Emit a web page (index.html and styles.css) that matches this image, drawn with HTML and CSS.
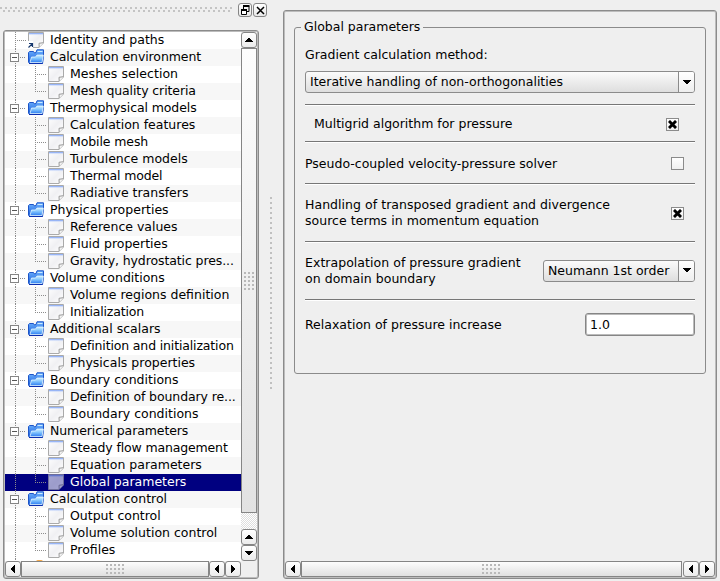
FILE: index.html
```html
<!DOCTYPE html>
<html lang="en">
<head>
<meta charset="utf-8">
<title>Global parameters</title>
<link rel="stylesheet" href="styles.css">
</head>
<body>
<svg class="defs" width="0" height="0">
  <defs>
    <linearGradient id="paper" x1="0" y1="0" x2="1" y2="1"><stop offset="0" stop-color="#fff"/><stop offset=".5" stop-color="#f0f0f3"/><stop offset="1" stop-color="#fff"/></linearGradient>
    <linearGradient id="cap" x1="0" y1="0" x2="0" y2="1"><stop offset="0" stop-color="#6c96f4"/><stop offset="1" stop-color="#fff" stop-opacity="0"/></linearGradient>
    <linearGradient id="blue" x1="0" y1="0" x2="0" y2="1"><stop offset="0" stop-color="#6fb4ff"/><stop offset="1" stop-color="#1357d8"/></linearGradient>
    <linearGradient id="front" x1="0" y1="0" x2="0" y2="1"><stop offset="0" stop-color="#d0f2ff"/><stop offset=".5" stop-color="#7cc0fc"/><stop offset="1" stop-color="#2d7df2"/></linearGradient>
  </defs>
  <symbol id="doc" viewBox="0 0 16 16">
    <path d="M.5 .5h15v10.500l-4.500 4.500H.5z" fill="url(#paper)" stroke="#aaa"/>
    <path d="M1 1h14v3H1z" fill="url(#cap)"/>
    <path d="M15.300 10.700 11 11.300 11.200 15.300" fill="#f4f4f4" stroke="#999"/>
  </symbol>
  <symbol id="link" viewBox="0 0 16 16">
    <use href="#doc"/>
    <path d="M0 9h5v7H0z" fill="#fff"/>
    <path d="M.5 15.500 4 12M1 11.500h3.500V15" fill="none" stroke="#17386e" stroke-width="1.200"/>
  </symbol>
  <symbol id="folder" viewBox="0 0 16 16">
    <path d="M.5 3.500 1.500 2.500H5.500L6.500 4 8 3.500 9 .8h6.500v7l-1 6.700H1.500L.5 13z" fill="url(#blue)" stroke="#1d55c8"/>
    <path d="M9.500 2.500h5" stroke="#cbeaff"/>
    <path d="M2 13.500 3.500 8H7.500L9 6h6.300L14 13.500z" fill="url(#front)" stroke="#e4f6ff" stroke-width=".8"/>
    <path d="M1 14.500h13.500" stroke="#0b2fae"/>
  </symbol>
  <symbol id="up" viewBox="0 0 8 5"><path d="M3 0h2v1h1v1h1v1h1v1H0V3h1V2h1V1h1z"/></symbol>
  <symbol id="down" viewBox="0 0 8 5"><path d="M0 0h8v1H7v1H6v1H5v1H3V3H2V2H1V1H0z"/></symbol>
  <symbol id="left" viewBox="0 0 4 8"><path d="M4 0v8H3V7H2V6H1V5H0V3h1V2h1V1h1V0z"/></symbol>
  <symbol id="right" viewBox="0 0 4 8"><path d="M0 0v8h1V7h1V6h1V5h1V3H3V2H2V1H1V0z"/></symbol>
  <symbol id="cross" viewBox="0 0 9 9"><path d="M2 2l5 5M7 2 2 7" stroke="#000" stroke-width="2.900" stroke-linecap="square"/></symbol>
</svg>

<div class="window">
  <section class="dock">
    <header class="dock-title">
      <span class="hatch"></span>
      <span class="tool"><svg width="13" height="13" viewBox="0 0 13 13"><path d="M4.500 5V2.500h5.500v5H8" fill="none" stroke="#000"/><path d="M4 2h6.500" stroke="#000" stroke-width="2"/><path d="M2.500 5.500h5v5h-5z" fill="#fff" stroke="#000"/><path d="M2 6h6" stroke="#000" stroke-width="2"/></svg></span>
      <span class="tool"><svg width="13" height="13" viewBox="0 0 13 13"><path d="M3 3l7 7M10 3l-7 7" stroke="#000" stroke-width="1.500"/></svg></span>
    </header>
    <div class="frame tree-frame">
      <div class="tree-top">
        <ul class="tree">
          <li class="top"><svg><use href="#link"/></svg><span>Identity and paths</span></li>
          <li class="group"><i></i><svg><use href="#folder"/></svg><span class="tight">Calculation environment</span></li>
          <li><svg><use href="#doc"/></svg><span class="loose">Meshes selection</span></li>
          <li class="last"><svg><use href="#doc"/></svg><span class="tight">Mesh quality criteria</span></li>
          <li class="group"><i></i><svg><use href="#folder"/></svg><span class="tight">Thermophysical models</span></li>
          <li><svg><use href="#doc"/></svg><span>Calculation features</span></li>
          <li><svg><use href="#doc"/></svg><span class="tight">Mobile mesh</span></li>
          <li><svg><use href="#doc"/></svg><span>Turbulence models</span></li>
          <li><svg><use href="#doc"/></svg><span class="tighter">Thermal model</span></li>
          <li class="last"><svg><use href="#doc"/></svg><span>Radiative transfers</span></li>
          <li class="group"><i></i><svg><use href="#folder"/></svg><span>Physical properties</span></li>
          <li><svg><use href="#doc"/></svg><span>Reference values</span></li>
          <li><svg><use href="#doc"/></svg><span>Fluid properties</span></li>
          <li class="last"><svg><use href="#doc"/></svg><span class="tight">Gravity, hydrostatic pres...</span></li>
          <li class="group"><i></i><svg><use href="#folder"/></svg><span>Volume conditions</span></li>
          <li><svg><use href="#doc"/></svg><span>Volume regions definition</span></li>
          <li class="last"><svg><use href="#doc"/></svg><span class="tighter">Initialization</span></li>
          <li class="group"><i></i><svg><use href="#folder"/></svg><span>Additional scalars</span></li>
          <li><svg><use href="#doc"/></svg><span class="tighter">Definition and initialization</span></li>
          <li class="last"><svg><use href="#doc"/></svg><span>Physicals properties</span></li>
          <li class="group"><i></i><svg><use href="#folder"/></svg><span>Boundary conditions</span></li>
          <li><svg><use href="#doc"/></svg><span class="tight">Definition of boundary re...</span></li>
          <li class="last"><svg><use href="#doc"/></svg><span>Boundary conditions</span></li>
          <li class="group"><i></i><svg><use href="#folder"/></svg><span class="tight">Numerical parameters</span></li>
          <li><svg><use href="#doc"/></svg><span class="tighter">Steady flow management</span></li>
          <li><svg><use href="#doc"/></svg><span>Equation parameters</span></li>
          <li class="last selected"><svg><use href="#doc"/></svg><span>Global parameters</span></li>
          <li class="group"><i></i><svg><use href="#folder"/></svg><span>Calculation control</span></li>
          <li><svg><use href="#doc"/></svg><span>Output control</span></li>
          <li><svg><use href="#doc"/></svg><span>Volume solution control</span></li>
          <li class="last"><svg><use href="#doc"/></svg><span>Profiles</span></li>
          <li class="cut"><b></b></li>
        </ul>
        <div class="vbar">
          <span class="btn"><svg width="8" height="5"><use href="#up"/></svg></span>
          <span class="slider"><i class="grip"></i></span>
          <span class="track"></span>
          <span class="btn"><svg width="8" height="5"><use href="#up"/></svg></span>
          <span class="btn"><svg width="8" height="5"><use href="#down"/></svg></span>
        </div>
      </div>
      <div class="hbar">
        <span class="btn"><svg width="4" height="8"><use href="#left"/></svg></span>
        <span class="slider"><i class="grip"></i></span>
        <span class="btn"><svg width="4" height="8"><use href="#left"/></svg></span>
        <span class="btn"><svg width="4" height="8"><use href="#right"/></svg></span>
      </div>
    </div>
  </section>

  <div class="splitter"></div>

  <main class="frame panel">
    <fieldset class="box">
      <legend>Global parameters</legend>
      <label class="method">Gradient calculation method:</label>
      <div class="combo"><span>Iterative handling of non-orthogonalities</span><b><svg width="8" height="5"><use href="#down"/></svg></b></div>
      <div class="row r1"><span>Multigrid algorithm for pressure</span><i class="check"><svg width="9" height="9"><use href="#cross"/></svg></i></div>
      <div class="row r2"><span>Pseudo-coupled velocity-pressure solver</span><i class="check"></i></div>
      <div class="row r3"><span>Handling of transposed gradient and divergence<br>source terms in momentum equation</span><i class="check"><svg width="9" height="9"><use href="#cross"/></svg></i></div>
      <div class="row r4"><span>Extrapolation of pressure gradient<br>on domain boundary</span><div class="combo small"><span>Neumann 1st order</span><b><svg width="8" height="5"><use href="#down"/></svg></b></div></div>
      <div class="row r5"><span>Relaxation of pressure increase</span><div class="input">1.0</div></div>
    </fieldset>
    <div class="hbar">
      <span class="btn"><svg width="4" height="8"><use href="#left"/></svg></span>
      <span class="slider"><i class="grip"></i></span>
      <span class="btn"><svg width="4" height="8"><use href="#left"/></svg></span>
      <span class="btn"><svg width="4" height="8"><use href="#right"/></svg></span>
    </div>
  </main>
</div>
</body>
</html>
```
FILE: styles.css
```css
* { box-sizing: border-box; }
body { margin: 0; background: #efefef; color: #000; font: 12.5px/16px "DejaVu Sans", sans-serif; overflow: hidden; }
svg { display: block; flex: none; }
.defs { position: absolute; }
.window { display: flex; width: 720px; height: 581px; }
.dock { width: 259px; flex: none; display: flex; flex-direction: column; }
.dock-title { height: 30px; width: 268px; display: flex; align-items: flex-start; padding-top: 3px; }
.hatch {
  flex: none; width: 233px; height: 8px; margin: 3px 5px 0 0;
  background:
    conic-gradient(from 0deg at 2px 2px, transparent 75%, #c4c4c4 0) 0 1px / 5px 8px repeat-x,
    conic-gradient(from 0deg at 2px 2px, transparent 75%, #c4c4c4 0) 3px 4px / 5px 8px repeat-x;
}
.tool { flex: none; width: 14px; height: 14px; margin-right: 1px; border: 1px solid #858585; border-radius: 3px; background: linear-gradient(#fff, #e8e8e8); display: flex; align-items: center; justify-content: center; }
.frame { border: 1px solid #8b8b8b; border-radius: 3px; box-shadow: inset 0 0 0 1px #bcbcbc; padding: 1px; display: flex; flex-direction: column; }
.tree-frame { margin-left: 3px; width: 256px; height: 549px; }
.tree-top { display: flex; height: 529px; }
.tree { list-style: none; margin: 0; padding: 0; width: 236px; height: 529px; overflow: hidden; background: #fff; }
.tree li {
  display: flex; align-items: flex-start; height: 17px; padding-left: 43px; white-space: nowrap;
  background:
    repeating-linear-gradient(#8c8c8c 0 1px, transparent 1px 2px) 10px 0 / 1px 17px no-repeat,
    repeating-linear-gradient(#8c8c8c 0 1px, transparent 1px 2px) 30px 0 / 1px 17px no-repeat,
    repeating-linear-gradient(90deg, #8c8c8c 0 1px, transparent 1px 2px) 32px 8px / 9px 1px no-repeat;
}
.tree li.last { background-size: 1px 17px, 1px 9px, 9px 1px; }
.tree li.top { padding-left: 23px; background-size: 1px 17px, 0 0, 9px 1px; background-position: 10px 0, 0 0, 12px 8px; }
.tree li.group { padding-left: 5px; background-size: 1px 17px, 0 0, 5px 1px; background-position: 10px 0, 0 0, 15px 8px; }
.tree li.cut { background-size: 1px 3px, 0 0, 0 0; height: 3px; padding: 0 0 0 31px; }
.tree li.cut b { width: 7px; height: 2px; margin-top: 1px; border-radius: 4px 4px 0 0; background: #f6a94a; }
.tree li:nth-child(even) { background-color: #f7f7f7; }
.tree li.cut:nth-child(even) { background-color: #fff; }
.tree li.selected { background-color: #000080; color: #fff; }
.selected svg { opacity: .65; }
.tree svg { width: 16px; height: 16px; margin-right: 6px; }
.tree li span { line-height: 16px; }
.tight { letter-spacing: -.1px; }
.tighter { letter-spacing: -.15px; }
.loose { letter-spacing: .05px; }
.group i { width: 9px; height: 9px; margin: 4px 9px 0 0; border: 1px solid #858585; background: linear-gradient(#555, #555) center / 5px 1px no-repeat #fff; }
.btn { width: 16px; height: 16px; flex: none; border: 1px solid #858585; border-radius: 3px; background: linear-gradient(#fff, #ebebeb); display: flex; align-items: center; justify-content: center; }
.vbar { width: 16px; display: flex; flex-direction: column; background: #efefef; }
.vbar .slider { height: 465px; border: 1px solid #858585; background: linear-gradient(#fdfdfd, #e2e2e2); display: flex; align-items: center; justify-content: center; }
.grip { background: conic-gradient(from 0deg at 2px 2px, transparent 75%, #b9b9b9 0) 0 0 / 4px 4px; }
.vbar .grip { width: 11px; height: 18px; }
.track { height: 16px; background: repeating-conic-gradient(#dedede 0 25%, #fff 0 50%) 0 0 / 2px 2px; }
.hbar { display: flex; height: 16px; }
.hbar .slider { flex: 1; border: 1px solid #858585; background: linear-gradient(#fdfdfd, #e0e0e0); display: flex; align-items: center; justify-content: center; }
.hbar .grip { width: 19px; height: 10px; }
.tree-frame .hbar { width: 236px; }
.panel .slider { margin-right: 1px; }
.splitter { width: 2px; height: 193px; margin: 197px 11px 0; background: conic-gradient(from 0deg at 2px 2px, transparent 75%, #c0c0c0 0) 0 0 / 5px 5px; }
.panel { width: 434px; height: 569px; margin-top: 10px; justify-content: space-between; }
.box { position: relative; margin: 15px 9px 0; height: 347px; border: 1px solid #8b8b8b; border-radius: 3px; padding: 19px 10px 0; min-width: 0; }
.box legend { position: absolute; top: -9px; left: 6px; padding: 0 3px; background: #efefef; }
.method { display: block; height: 24px; }
.combo { display: flex; height: 22px; width: 390px; border: 1px solid #8b8b8b; border-radius: 3px; background: linear-gradient(#fbfbfb, #dedede); padding-left: 4px; line-height: 20px; white-space: nowrap; }
.combo span { flex: 1; }
.combo b { width: 16px; border-left: 1px solid #8b8b8b; background: linear-gradient(#fff, #eee); display: flex; align-items: center; justify-content: center; border-radius: 0 2px 2px 0; }
.combo.small { width: 152px; }
.row { display: flex; align-items: center; justify-content: space-between; width: 390px; border-top: 1px solid #777; box-shadow: inset 0 1px #fff; white-space: nowrap; }
.r1 { margin-top: 11px; height: 37px; padding: 2px 16px 0 9px; }
.r2 { height: 42px; padding: 2px 11px 0 0; }
.r3 { height: 58px; padding: 0 11px 0 0; }
.r3 .check { margin-top: 2px; }
.r3 span, .r4 > span { letter-spacing: .04px; }
.r4 { height: 58px; }
.r5 { height: 50px; }
.check { flex: none; width: 13px; height: 13px; border: 1px solid #8b8b8b; background: linear-gradient(#fff, #f0f0f0); display: flex; align-items: center; justify-content: center; }
.input { width: 110px; height: 23px; border: 1px solid #858585; border-radius: 3px; background: #fff; padding-left: 4px; line-height: 21px; box-shadow: inset 0 0 0 1px #bbb; }
```
